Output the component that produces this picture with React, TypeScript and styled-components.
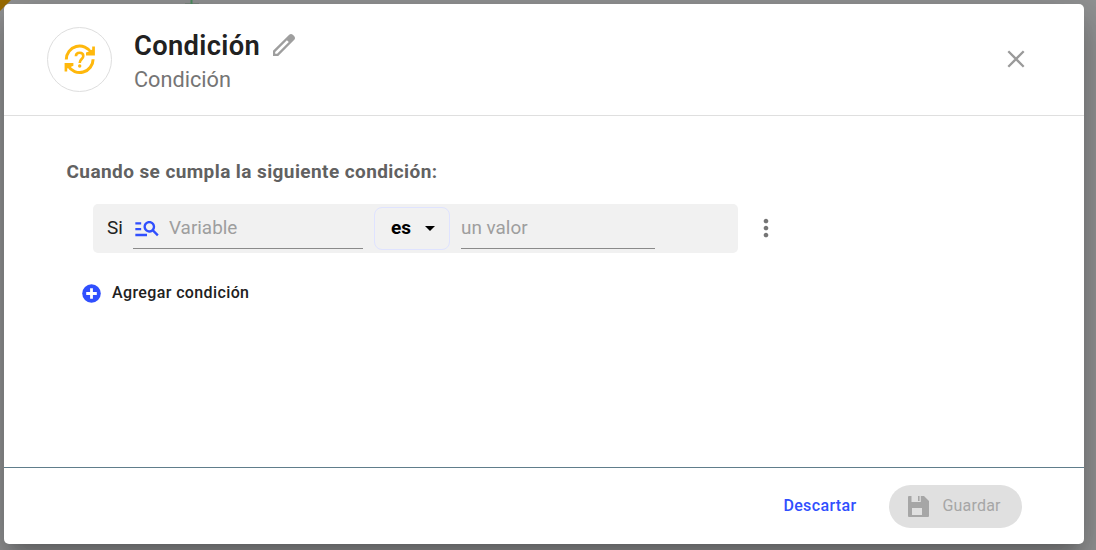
import React, { useState } from "react";
import styled, { createGlobalStyle } from "styled-components";
import { MdArrowDropDown, MdManageSearch, MdMoreVert } from "react-icons/md";

const GlobalStyle = createGlobalStyle`
  * {
    box-sizing: border-box;
  }
  body {
    margin: 0;
    font-family: Roboto, sans-serif;
    background-color: #929394;
    overflow: hidden;
  }
  button, input {
    font-family: inherit;
  }
  button {
    border: none;
    background: none;
    padding: 0;
    cursor: pointer;
  }
  svg {
    display: block;
    flex-shrink: 0;
  }
`;

const Backdrop = styled.div`
  position: relative;
  width: 1096px;
  height: 550px;
  padding: 4px;
  overflow: hidden;
`;

const Canvas = styled.svg`
  position: absolute;
  top: 0;
  left: 0;
`;

const Dialog = styled.div`
  position: relative;
  display: flex;
  flex-direction: column;
  width: 1080px;
  height: 540px;
  border-radius: 5px;
  background-color: #fff;
  box-shadow: 0 11px 15px -7px rgba(0, 0, 0, 0.2),
    0 24px 38px 3px rgba(0, 0, 0, 0.14), 0 9px 46px 8px rgba(0, 0, 0, 0.12);
`;

const Header = styled.header`
  display: flex;
  align-items: center;
  height: 112px;
  padding: 0 59px 0 43px;
  border-bottom: 1px solid #dfdfdf;
`;

const Avatar = styled.div`
  display: flex;
  align-items: center;
  justify-content: center;
  width: 65px;
  height: 65px;
  margin-right: 22px;
  border: 1px solid #dedede;
  border-radius: 50%;
`;

const Titles = styled.div`
  flex: 1;
  padding-top: 7px;
`;

const TitleRow = styled.div`
  display: flex;
  align-items: center;
  gap: 13px;
  height: 34px;

  svg {
    margin-bottom: 3px;
  }
`;

const Title = styled.h1`
  margin: 0;
  font-size: 27.3px;
  font-weight: 600;
  line-height: 34px;
  letter-spacing: 0.35px;
  color: #212121;
`;

const Subtitle = styled.div`
  font-size: 21.7px;
  line-height: 34px;
  color: #757575;
`;

const CloseButton = styled.button`
  margin-bottom: 2px;
`;

const Content = styled.main`
  flex: 1;
  padding: 44px 62px 0;
`;

const Question = styled.h2`
  margin: 0 0 20px;
  padding-left: 0.5px;
  font-size: 19px;
  font-weight: 700;
  line-height: 24px;
  letter-spacing: 0.41px;
  color: #616161;
`;

const ConditionRow = styled.div`
  display: flex;
  align-items: center;
  margin-left: 27px;
`;

const Condition = styled.div`
  display: flex;
  align-items: center;
  width: 645px;
  height: 49px;
  padding-left: 14px;
  border-radius: 5px;
  background-color: #f1f1f1;
`;

const Prefix = styled.span`
  width: 26px;
  padding-bottom: 2px;
  font-size: 19px;
  line-height: 24px;
  color: #212121;
`;

const Field = styled.label<{ width: number }>`
  display: flex;
  align-items: center;
  gap: 8px;
  width: ${({ width }) => width}px;
  height: 41px;
  margin-bottom: 1px;
  border-bottom: 1px solid #8a8a8a;
  color: #304ffe;
`;

const Input = styled.input`
  flex: 1;
  min-width: 0;
  height: 24px;
  padding: 0;
  border: none;
  outline: none;
  background: transparent;
  font-size: 18.9px;
  color: #212121;

  &::placeholder {
    color: #9e9e9e;
  }
`;

const Operator = styled.button`
  display: flex;
  align-items: center;
  justify-content: space-between;
  width: 76px;
  height: 43px;
  margin: 0 11px;
  padding: 0 7px 2px 16px;
  border: 1px solid #dfe3ff;
  border-radius: 8px;
  font-size: 19px;
  font-weight: 700;
  color: #000;
`;

const MenuButton = styled.button`
  margin: 0 0 2px 14px;
  color: #757575;
`;

const AddButton = styled.button`
  display: flex;
  align-items: center;
  gap: 11px;
  margin: 29px 0 0 16px;
  font-size: 16px;
  font-weight: 500;
  line-height: 22px;
  letter-spacing: 0.38px;
  color: #212121;
`;

const Footer = styled.footer`
  display: flex;
  align-items: center;
  justify-content: flex-end;
  gap: 32.5px;
  height: 77px;
  padding-right: 62px;
  border-top: 1px solid #607d8b;
`;

const DiscardButton = styled.button`
  padding-bottom: 2px;
  font-size: 16px;
  font-weight: 500;
  letter-spacing: 0.36px;
  color: #304ffe;
`;

const SaveButton = styled.button`
  display: flex;
  align-items: center;
  gap: 13px;
  width: 133px;
  height: 43px;
  padding-left: 19px;
  border-radius: 22px;
  background-color: #e0e0e0;
  color: #a6a6a6;
`;

const SaveLabel = styled.span`
  padding: 0 0 2px 0.5px;
  font-size: 16px;
  letter-spacing: 0.2px;
`;

const ConditionIcon = () => (
  <svg width='32' height='32' viewBox='0.4 0 32 32' fill='none' stroke='#ffb80c'>
    <path d='M2.7 15.5A13.4 13.4 0 0 1 27.7 8.7' strokeWidth='3' />
    <path d='M29.5 15.2A13.4 13.4 0 0 1 4.6 22' strokeWidth='3' />
    <path d='M31.3 2.6V11.4H22.4V8.6L25.4 7.4L28.6 5.6V2.6Z' fill='#ffb80c' stroke='none' />
    <path d='M1 27.6V19H9.8V21.8L7 23L3.6 24.6V27.6Z' fill='#ffb80c' stroke='none' />
    <path
      d='M12.3 12.2C12.4 9.8 13.9 8.8 16 8.8C18.3 8.8 19.7 10 19.7 12C19.7 15 16.1 15.2 16.1 19'
      strokeWidth='2.6'
    />
    <circle cx='16.1' cy='22' r='1.7' fill='#ffb80c' stroke='none' />
  </svg>
);

const EditIcon = () => (
  <svg width='22' height='22' viewBox='0 0 22 22'>
    <path
      fill='#9e9e9e'
      fillRule='evenodd'
      d='M0 16.8L16.2 .7Q18-.7 19.8 .7L21.3 2.2Q22.7 4 21.3 5.8L5.2 22H0ZM2.2 17.9V19.8H4.1L15.8 8.1L13.9 6.2Z'
    />
  </svg>
);

const CloseIcon = () => (
  <svg width='18' height='18' viewBox='0 0 18 18' stroke='#9a9a9a' strokeWidth='2.3'>
    <path d='M1.3 1.3L16.7 16.7M16.7 1.3L1.3 16.7' />
  </svg>
);

const AddIcon = () => (
  <svg width='19' height='19' viewBox='0 0 19 19'>
    <circle cx='9.5' cy='9.5' r='9.3' fill='#304ffe' />
    <path d='M9.5 4.2V14.8M4.2 9.5H14.8' stroke='#fff' strokeWidth='2.8' />
  </svg>
);

const SaveIcon = () => (
  <svg width='21' height='21' viewBox='0 0 21 21' fill='#a6a6a6'>
    <path
      fillRule='evenodd'
      d='M1 0H3.5V6H12.8V0H16L21 5V20Q21 21 20 21H1Q0 21 0 20V1Q0 0 1 0ZM4 12V19H14V12Z'
    />
    <path d='M10 0H11.6V5H10Z' />
  </svg>
);

const App = () => {
  const [variable, setVariable] = useState("");
  const [value, setValue] = useState("");

  return (
    <>
      <GlobalStyle />
      <Backdrop>
        <Canvas width='1096' height='12'>
          <path d='M0 0H11L0 11Z' fill='#9b6c00' />
          <path d='M185 3.5H199' stroke='#7b857e' />
          <path d='M191.5 0V4' stroke='#4f8f62' strokeWidth='2' />
        </Canvas>
        <Dialog>
          <Header>
            <Avatar>
              <ConditionIcon />
            </Avatar>
            <Titles>
              <TitleRow>
                <Title>Condición</Title>
                <EditIcon />
              </TitleRow>
              <Subtitle>Condición</Subtitle>
            </Titles>
            <CloseButton>
              <CloseIcon />
            </CloseButton>
          </Header>
          <Content>
            <Question>Cuando se cumpla la siguiente condición:</Question>
            <ConditionRow>
              <Condition>
                <Prefix>Si</Prefix>
                <Field width={230}>
                  <MdManageSearch size={28} />
                  <Input
                    placeholder='Variable'
                    value={variable}
                    onChange={(e: React.ChangeEvent<HTMLInputElement>) =>
                      setVariable(e.target.value)
                    }
                  />
                </Field>
                <Operator>
                  es
                  <MdArrowDropDown size={24} />
                </Operator>
                <Field width={194}>
                  <Input
                    placeholder='un valor'
                    value={value}
                    onChange={(e: React.ChangeEvent<HTMLInputElement>) =>
                      setValue(e.target.value)
                    }
                  />
                </Field>
              </Condition>
              <MenuButton>
                <MdMoreVert size={28} />
              </MenuButton>
            </ConditionRow>
            <AddButton>
              <AddIcon />
              Agregar condición
            </AddButton>
          </Content>
          <Footer>
            <DiscardButton>Descartar</DiscardButton>
            <SaveButton disabled>
              <SaveIcon />
              <SaveLabel>Guardar</SaveLabel>
            </SaveButton>
          </Footer>
        </Dialog>
      </Backdrop>
    </>
  );
};

export default App;
